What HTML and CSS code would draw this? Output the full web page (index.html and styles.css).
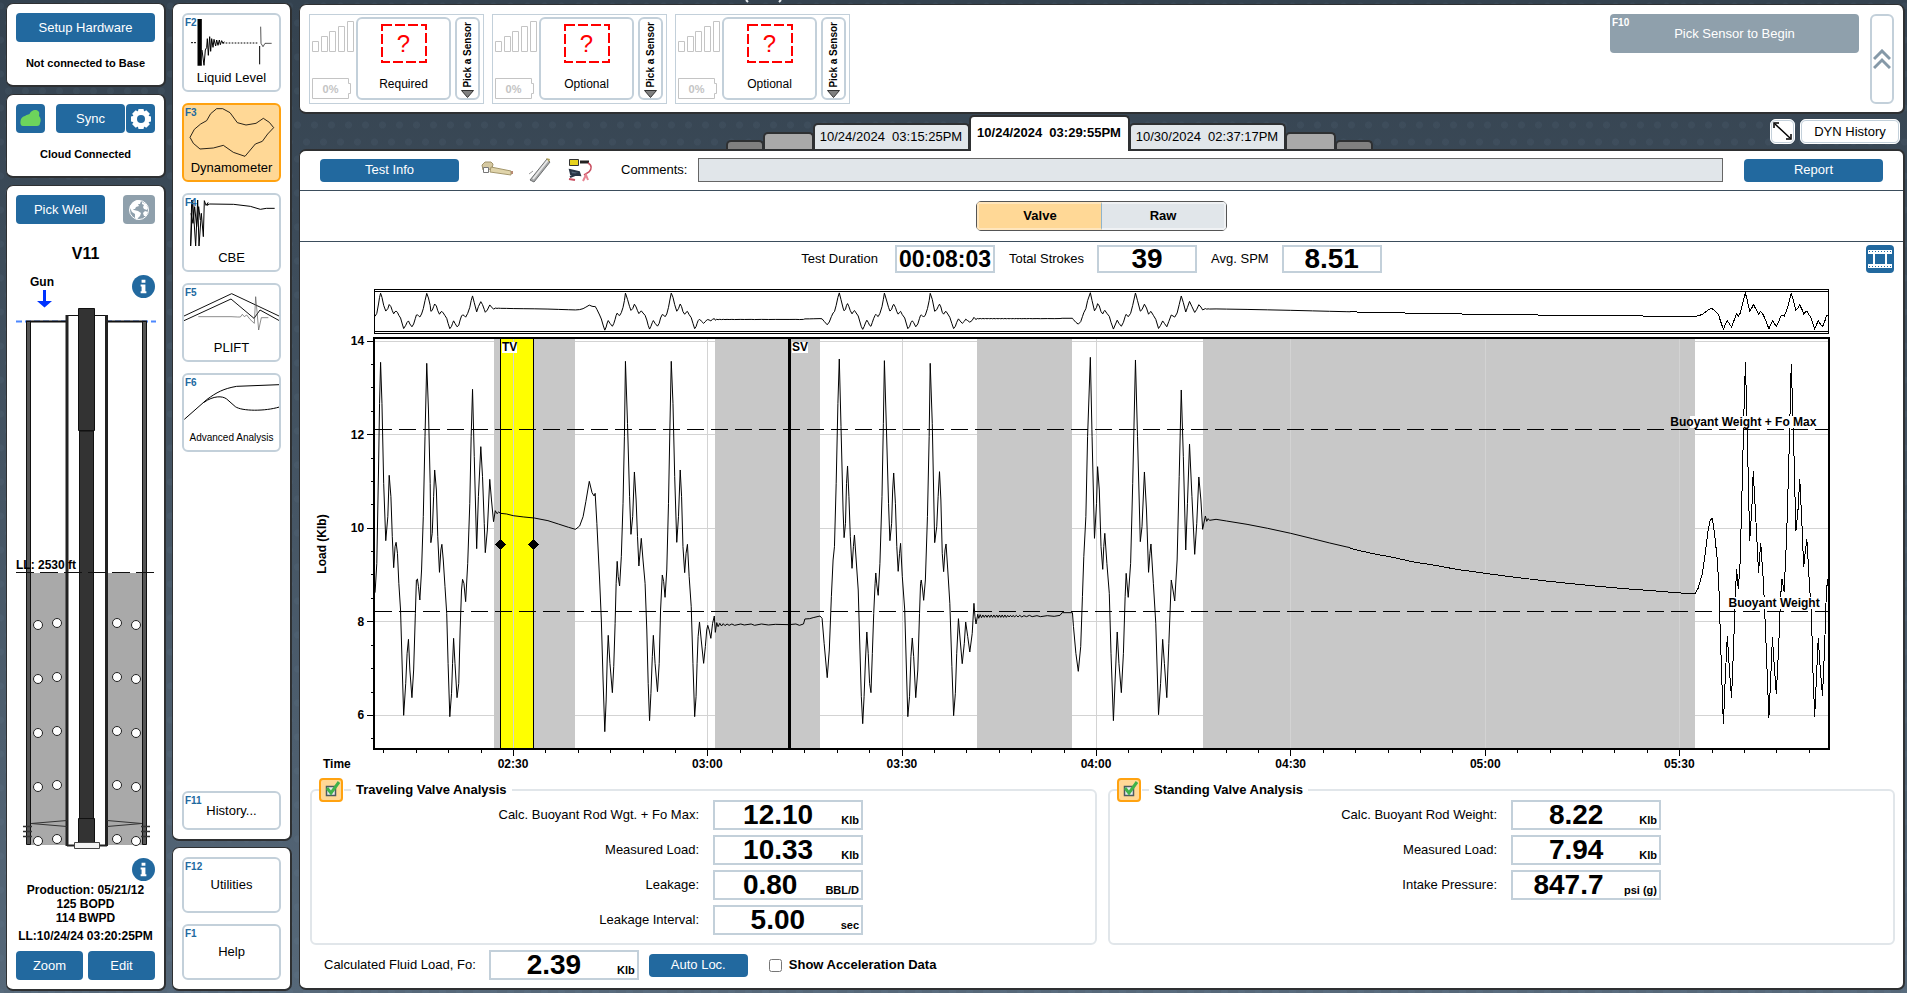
FILE: index.html
```html
<!DOCTYPE html>
<html lang="en">
<head>
<meta charset="utf-8">
<title>Dynamometer</title>
<link rel="stylesheet" href="styles.css">
</head>
<body>
<svg class="sprite" aria-hidden="true">
  <defs>
    <g id="ico-info">
      <circle cx="12" cy="12" r="12" fill="#22699f"/>
      <path d="M10 5h4v3h-4zM9 10h5v7h1v2H9v-2h1v-5H9z" fill="#fff"/>
    </g>
    <g id="ico-signal" fill="none" stroke="#c4c4c4">
      <path d="M.5 21.500h6v10h-6zM9.500 16.500h6v15h-6zM17.500 11.500h6v20h-6zM26.500 6.500h6v25h-6zM35.500 1.500h6v30h-6z"/>
    </g>
    <g id="ico-battery" fill="none" stroke="#c4c4c4">
      <path d="M.5.5h36v5h2v10h-2v5H.5z"/>
    </g>
    <g id="ico-check">
      <path d="M7.500 8.500h9v9h-9z" fill="#e8edf0" stroke="#4c5a60" stroke-width="1.500"/>
      <path d="M8 10l4 5 8-11" fill="none" stroke="#3fb24a" stroke-width="3"/>
    </g>
  </defs>
</svg>
<svg class="title-edge" viewBox="0 0 40 3" aria-hidden="true"><path d="M2 0l2 2M37 0l-2 2" stroke="#e8ecef" stroke-width="2"/></svg>

<aside class="well-column">
  <section class="panel status">
    <button class="btn">Setup Hardware</button>
    <p>Not connected to Base</p>
  </section>

  <section class="panel status">
    <div class="sync-row">
      <button class="btn square" aria-label="Cloud"><svg width="21" height="17" viewBox="0 0 21 17"><path d="M3 16C0 16 0 12 1 9c1-2 3-3 4-3 2-2 5-1 5-3 2-3 6-4 8-2 2 1 1 4 1 5 2 2 2 5 1 7 0 2-1 3-3 3z" fill="#6dd45c"/></svg></button>
      <div class="sync-pair">
        <button class="btn sync">Sync</button>
        <button class="btn square" aria-label="Sync settings"><svg width="20" height="20" viewBox="-10 -10 20 20"><g fill="#fff"><circle r="8"/><path id="cog" d="M-2.500-10h5l1 4h-7zM-2.500 10h5l1-4h-7zM-10-2.500v5l4 1v-7zM10-2.500v5l-4 1v-7z"/><use href="#cog" transform="rotate(45)"/></g><circle r="4" fill="#22699f"/></svg></button>
      </div>
    </div>
    <p>Cloud Connected</p>
  </section>

  <section class="panel well">
    <div class="pick-row">
      <button class="btn pick">Pick Well</button>
      <button class="btn globe" aria-label="Map"><svg width="22" height="22" viewBox="0 0 22 22"><circle cx="11" cy="11" r="9.500" fill="#8fa0ac" stroke="#fff"/><path d="M2 7l3-4 4-2 4 1-1 3-2 0 1 2-3 1-1 2-2 0 1 1 4 1 3 2-1 3-2 2-1 2-2-2 0-4-3-2-2-4zM14 3l4 2 2 4-1 2-3-1-1-2 1-2-2-1zM17 12l3 1-2 4-2 0-1-3z" fill="#fff"/></svg></button>
    </div>
    <h1>V11</h1>
    <div class="bore">
      <svg class="bore-drawing" viewBox="16 267 139 588" preserveAspectRatio="xMidYMin meet">
        <text x="30" y="286">Gun</text>
        <path d="M43 290h3v11h6l-7.500 6.500L37 301h6z" fill="#0033ff"/>
        <path d="M16 321.500h140" stroke="#4d88ff" stroke-width="2" stroke-dasharray="6 3"/>
        <path d="M27 322h39v251H27zM107 322h39v251h-39z" fill="#fff"/>
        <path d="M30 573h37v272H30zM106 573h37v272h-37z" fill="#a9a9a9"/>
        <path d="M67 315.500h40v530H67z" fill="#fff" stroke="#111"/>
        <path d="M26 321.500h41M107 321.500h40" stroke="#111" stroke-width="2"/>
        <path d="M26.500 321.500h4v523h-4zM142.500 321.500h4v523h-4z" fill="#555" stroke="#111"/>
        <path d="M67 315v531M106.500 315v531" stroke="#222" stroke-width="3"/>
        <path d="M67 845.500h40" stroke="#222" stroke-width="2"/>
        <g fill="#333" stroke="#111"><path d="M79.500 431h14v390h-14z"/><path d="M78.500 308.500h16v122h-16zM78.500 818.500h16v25h-16z"/></g>
        <path d="M74.500 842.500h25v6h-25z" fill="#f4f4f4" stroke="#444"/>
        <path d="M31 823.500l36-3M31 823.500l36 3M142 823.500l-35-3M142 823.500l-35 3" stroke="#333" fill="none"/>
        <path d="M23 826.500h9M23 831.500h9M23 836.500h9M141 826.500h9M141 831.500h9M141 836.500h9" stroke="#333" stroke-width="1.500"/>
        <path d="M16 572.500h138" stroke="#111" stroke-dasharray="18 6"/>
        <g id="bubbles" fill="#fff" stroke="#222"><circle cx="38" cy="625" r="4.500"/><circle cx="57" cy="623" r="4.500"/><circle cx="117" cy="623" r="4.500"/><circle cx="136" cy="625" r="4.500"/></g>
        <use href="#bubbles" y="54"/><use href="#bubbles" y="108"/><use href="#bubbles" y="162"/><use href="#bubbles" y="216"/>
        <text x="16" y="569">LL: 2530 ft</text>
      </svg>
      <button class="info info-top" aria-label="Surface details"><svg viewBox="0 0 24 24"><use href="#ico-info"/></svg></button>
    </div>
    <button class="info" aria-label="Production details"><svg viewBox="0 0 24 24"><use href="#ico-info"/></svg></button>
    <div class="production">
      <div>Production: 05/21/12</div>
      <div>125 BOPD</div>
      <div>114 BWPD</div>
      <div class="level">LL:10/24/24 03:20:25PM</div>
    </div>
    <div class="well-actions">
      <button class="btn">Zoom</button>
      <button class="btn">Edit</button>
    </div>
  </section>
</aside>

<nav class="nav-column">
  <section class="panel nav-main">
    <button class="tile"><kbd>F2</kbd>
      <svg viewBox="552 45 285 165"><g fill="none" stroke="#000" stroke-width="3"><path d="M573 128h18" stroke-dasharray="6 3"/><path d="M595 57v140M599 57v140M603 57v140" stroke-width="5"/><path d="M606 150l6 46 4-46 4-8 2-26 3 50 4-56 3 44 3-38 4 26 3-24 5 20 3-18 4 16 4-16 3 14 4-12 4 8 4-5"/><path d="M668 129h108" stroke-dasharray="5 4"/><path d="M779 138v55"/><path d="M782 80l1 50 6 10 6-10h20" stroke-width="2"/></g></svg>
      <span>Liquid Level</span></button>
    <button class="tile active"><kbd>F3</kbd>
      <svg viewBox="552 315 285 165"><path d="M570 412l13-24 19-16 18-10 12-21 18-15h18l22 12 22 30 26 7 30-5 22-15 18 12 13 16-18 19-16 22-21 8-31 37-35-12-30-21-30 8-40 3-20-17z" fill="none" stroke="#000" stroke-width="2.500"/></svg>
      <span>Dynamometer</span></button>
    <button class="tile"><kbd>F4</kbd>
      <svg viewBox="552 585 285 165"><path d="M575 600l-3 138 6-138 9 138 6-138 4 138 7-98 6 70 3-108 5 14 6-8-3 8 8-4 72 1 50 6 30 9 18-3h25M573 640l6 30 5-50 6 60 6-60 5 40" fill="none" stroke="#000" stroke-width="3"/></svg>
      <span>CBE</span></button>
    <button class="tile"><kbd>F5</kbd>
      <svg viewBox="552 855 285 165"><g fill="none" stroke="#111" stroke-width="3"><path d="M552 948l143-67 142 67M552 962l141-65 69 58 18-25 58 32"/><path d="M595 950h98l20 1h8l6-8 6 7 7-5 10 13 13 12 4-80 9 100 8-37h21" stroke="#555" stroke-width="2"/></g></svg>
      <span>PLIFT</span></button>
    <button class="tile"><kbd>F6</kbd>
      <svg viewBox="552 315 285 165"><path d="M553 448l67-59c30-22 50-33 90-40l128-5M612 397c28-20 55-20 68-10l26 23c20 14 90 14 132 1" fill="none" stroke="#000" stroke-width="3"/></svg>
      <span class="small">Advanced Analysis</span></button>
    <button class="tile history"><kbd>F11</kbd><span>History...</span></button>
  </section>
  <section class="panel nav-extra">
    <button class="tile"><kbd>F12</kbd><span>Utilities</span></button>
    <button class="tile"><kbd>F1</kbd><span>Help</span></button>
  </section>
</nav>

<main>
  <section class="panel sensors">
    <div class="sensor">
      <div class="radio"><svg width="42" height="32"><use href="#ico-signal"/></svg><div class="battery"><svg width="39" height="21"><use href="#ico-battery"/></svg><span>0%</span></div></div>
      <button class="sensor-slot"><span class="unknown"><svg width="46" height="39"><path d="M1 1h44v37H1z" fill="none" stroke="#f00" stroke-width="2" stroke-dasharray="10 3"/></svg><b>?</b></span>Required</button>
      <button class="sensor-pick"><span>Pick a Sensor</span><svg width="13" height="8"><path d="M.5.5h12l-6 7z" fill="#808080" stroke="#333"/></svg></button>
    </div>
    <div class="sensor">
      <div class="radio"><svg width="42" height="32"><use href="#ico-signal"/></svg><div class="battery"><svg width="39" height="21"><use href="#ico-battery"/></svg><span>0%</span></div></div>
      <button class="sensor-slot"><span class="unknown"><svg width="46" height="39"><path d="M1 1h44v37H1z" fill="none" stroke="#f00" stroke-width="2" stroke-dasharray="10 3"/></svg><b>?</b></span>Optional</button>
      <button class="sensor-pick"><span>Pick a Sensor</span><svg width="13" height="8"><path d="M.5.5h12l-6 7z" fill="#808080" stroke="#333"/></svg></button>
    </div>
    <div class="sensor">
      <div class="radio"><svg width="42" height="32"><use href="#ico-signal"/></svg><div class="battery"><svg width="39" height="21"><use href="#ico-battery"/></svg><span>0%</span></div></div>
      <button class="sensor-slot"><span class="unknown"><svg width="46" height="39"><path d="M1 1h44v37H1z" fill="none" stroke="#f00" stroke-width="2" stroke-dasharray="10 3"/></svg><b>?</b></span>Optional</button>
      <button class="sensor-pick"><span>Pick a Sensor</span><svg width="13" height="8"><path d="M.5.5h12l-6 7z" fill="#808080" stroke="#333"/></svg></button>
    </div>
    <button class="begin" disabled><kbd>F10</kbd>Pick Sensor to Begin</button>
    <button class="collapse" aria-label="Collapse"><svg width="18" height="20" viewBox="0 0 18 20"><path d="M1 10l8-8 8 8M1 19l8-8 8 8" fill="none" stroke="#8599a8" stroke-width="3"/></svg></button>
  </section>

  <div class="tab-band">
    <div class="tabs">
      <button class="tab stub far" aria-label="Earlier tests"></button>
      <button class="tab stub near" aria-label="Previous test"></button>
      <button class="tab">10/24/2024&nbsp; 03:15:25PM</button>
      <button class="tab current">10/24/2024&nbsp; 03:29:55PM</button>
      <button class="tab">10/30/2024&nbsp; 02:37:17PM</button>
      <button class="tab stub near" aria-label="Next test"></button>
      <button class="tab stub far" aria-label="Later tests"></button>
    </div>
    <button class="outline expand" aria-label="Expand"><svg width="19" height="19" viewBox="0 0 19 19"><path d="M2 2l15 14" stroke="#000" stroke-width="1.500"/><path d="M1 6V1h5M18 12v5h-5" fill="none" stroke="#000" stroke-width="1.500"/></svg></button>
    <button class="outline">DYN History</button>
  </div>

  <section class="panel test">
    <div class="toolbar">
      <button class="btn wide">Test Info</button>
      <div class="tools">
        <svg width="32" height="24" viewBox="0 0 32 24"><path d="M1 7l3-3h6l2 2-1 5-9 1z" fill="#d5c8a0" stroke="#a0926a"/><path d="M2.500 9.500h5v5h-5z" fill="#fff" stroke="#777"/><path d="M10 9l20 4v4l-21-3z" fill="#e0d4aa" stroke="#a3966c"/><path d="M30 13h2v3h-2z" fill="#b88a72"/></svg>
        <svg width="24" height="28" viewBox="0 0 24 28"><path d="M19 3l3 3L6 26l-4-2z" fill="#a7a9aa" stroke="#6d6f70"/><path d="M20 4L5 23" stroke="#e6e6e6" stroke-width="2"/><path d="M18 2l4 1-1 3z" fill="#b0a15a"/><path d="M1 18l4-3" stroke="#999"/></svg>
        <svg width="26" height="26" viewBox="0 0 26 26"><path d="M2.500 2.500h9v6h-9z" fill="#e7d21d" stroke="#333"/><path d="M13 5h9" stroke="#222" stroke-width="3"/><path d="M21 6c4 2 4 6 1 9l-5 3" fill="none" stroke="#c95062" stroke-width="1.500"/><path d="M3 13l9 2 1 3-9-1zM3 20l10-4" fill="#536579" stroke="#273445" stroke-width="2"/><path d="M2 22l6 1" stroke="#c95062" stroke-width="2"/><path d="M16 24l3-6 2 5" fill="none" stroke="#e88593" stroke-width="2"/></svg>
      </div>
      <label for="comments">Comments:</label>
      <input id="comments" type="text">
      <button class="btn wide">Report</button>
    </div>

    <div class="view-row">
      <div class="segmented">
        <button class="on" aria-pressed="true">Valve</button><button aria-pressed="false">Raw</button>
      </div>
    </div>

    <div class="metrics">
      <div class="metric-group">
        <label for="duration">Test Duration</label><output id="duration" class="reading compact">00:08:03</output>
        <label for="strokes">Total Strokes</label><output id="strokes" class="reading">39</output>
        <label for="spm">Avg. SPM</label><output id="spm" class="reading">8.51</output>
      </div>
      <button class="btn film" aria-label="Film strip"><svg width="24" height="18" viewBox="0 0 24 18"><path d="M0 0h24v4H0zM0 14h24v4H0zM5 4h2v10H5zM17 4h2v10h-2z" fill="#fff"/><path d="M1 1.500h22M1 16.500h22" stroke="#22699f" stroke-dasharray="1 2"/></svg></button>
    </div>

    <div class="chart">
      <svg viewBox="300 273 1603 502" preserveAspectRatio="none" shape-rendering="crispEdges" role="img" aria-label="Load over time">
        <defs>
          <g id="trace" fill="none" stroke="#000">
            <g transform="translate(300 270) scale(.34439 .33333)">
              <polyline vector-effect="non-scaling-stroke" points="218,968 223,880 228,600 231,400 234,277 238,400 243,640 249,812 255,740 259,616 264,680 268,800 272,893 276,830 279,817 283,850 287,940 292,1020 297,1200 301,1336 307,1240 311,1150 315,1108 319,1200 325,1283 330,1200 335,1030 338,930 341,927 344,950 348,990 353,900 358,740 363,500 368,280 373,420 378,640 380,818 384,790 388,680 391,600 396,660 400,800 405,907 409,840 412,823 416,870 421,950 426,1030 430,1180 435,1340"/>
              <polyline vector-effect="non-scaling-stroke" points="435,1340 440,1270 443,1180 446,1105 450,1180 456,1283 461,1240 465,1080 469,960 472,928 476,940 481,995 487,880 493,700 497,500 501,358 506,560 513,836 518,680 525,530 530,620 535,760 538,848 544,780 551,628 556,690 562,755 567,722 572,731 577,726 582,730 600,732 619,737 650,741 680,744 720,752 750,762 780,772 800,778 812,768 822,740 830,695 840,634 848,668 854,678 857,670 862,760 870,930 875,1050 880,1230 885,1385"/>
              <polyline vector-effect="non-scaling-stroke" points="885,1385 889,1290 892,1170 895,1096 900,1180 907,1268 911,1190 915,1060 918,940 921,874 924,920 928,948 933,860 938,700 942,500 945,274 951,460 957,680 961,793 966,740 971,606 976,690 980,800 984,888 988,840 991,805 996,870 1002,940 1007,1080 1011,1240 1015,1352 1019,1270 1023,1160 1026,1096 1031,1180 1038,1265 1043,1180 1047,1020 1052,915 1056,935 1060,982 1065,900 1070,700 1074,480 1078,274"/>
              <polyline vector-effect="non-scaling-stroke" points="1078,274 1083,400 1088,620 1094,817 1099,740 1104,600 1108,680 1112,830 1117,908 1121,850 1125,823 1130,920 1136,1010 1141,1180 1146,1340 1150,1280 1153,1180 1156,1100 1160,1056 1165,1110 1172,1180 1177,1130 1181,1080 1184,1066 1188,1080 1193,1105 1198,1060 1203,1038 1206,1087 1210,1058 1214,1070 1219,1060 1224,1068 1229,1061 1234,1067 1240,1062 1246,1066 1254,1062 1262,1066 1280,1062 1290,1065 1310,1062 1320,1066 1340,1062 1360,1065 1380,1063 1420,1064 1440,1062 1450,1066 1462,1062 1466,1047 1480,1046 1490,1043 1510,1038"/>
            </g>
            <g transform="translate(820 270) scale(.34439 .33333)">
              <polyline vector-effect="non-scaling-stroke" points="0,1038 6,1045 12,1120 21,1223 27,1140 33,980 38,870 42,830 47,640 52,400 56,267 61,470 67,720 70,803 74,760 77,640 80,588 84,680 88,800 93,895 97,830 100,795 105,870 111,960 116,1140 120,1280 124,1361 128,1280 132,1170 136,1086 140,1150 144,1240 148,1268 152,1150 156,1030 160,940 162,909 165,945 169,976 174,880 180,680 184,460 187,272 193,480 199,700 203,812 208,760 211,660 214,609 219,700 223,830 227,904 231,850 234,820 239,920 246,1020 251,1200 255,1340"/>
              <polyline vector-effect="non-scaling-stroke" points="255,1340 260,1280 264,1160 268,1104 272,1160 278,1283 284,1200 289,1030 292,940 294,930 298,960 301,991 306,930 312,740 317,500 320,280 326,460 333,818 339,770 343,680 347,605 351,690 355,850 359,905 363,840 366,822 371,900 377,1000 383,1190 388,1337 393,1270 397,1150 402,1046 407,1110 413,1181 419,1120 423,1056 429,1100 435,1146 442,1090 447,1000 450,1040 453,1062 458,1033"/>
              <polyline vector-effect="non-scaling-stroke" points="458,1033 461,1045 465,1034 469,1043 473,1035 477,1042 481,1035 485,1042 489,1035 493,1042 497,1035 501,1042 505,1035 509,1042 513,1035 517,1042 521,1035 525,1042 529,1035 533,1042 537,1035 541,1042 545,1036 549,1041 553,1036 557,1041 561,1036 565,1041 570,1036 575,1041 580,1036 586,1041 592,1037 600,1040 608,1036 616,1040 630,1037 640,1040 660,1037 680,1039 697,1036 703,1028 733,1028 736,1070 743,1150 750,1204"/>
              <polyline vector-effect="non-scaling-stroke" points="750,1204 757,1130 762,980 766,860 772,740 777,500 785,262 790,500 797,805 803,700 806,590 811,660 816,830 821,898 824,830 827,790 833,880 840,970 845,1150 852,1352 857,1230 863,1086 868,1180 875,1268 881,1150 886,980 889,910 895,982 902,880 908,640 916,270 922,500 930,815 935,770 942,606 948,720 954,907 958,850 961,822 968,940 975,1060 983,1334"/>
              <polyline vector-effect="non-scaling-stroke" points="983,1334 989,1240 995,1108 1000,1180 1007,1283 1013,1120 1020,930 1025,960 1030,993 1037,870 1043,620 1049,360 1055,560 1062,840 1067,700 1073,522 1080,680 1088,853 1094,760 1100,621 1106,690 1111,778 1119,738 1123,754 1127,746 1131,751 1150,748 1180,753 1240,763 1300,775 1367,790 1430,806 1480,819 1530,831 1540,833"/>
            </g>
            <g transform="translate(1350 270) scale(.35527 .33333)">
              <polyline vector-effect="non-scaling-stroke" points="0,835 60,850 120,862 180,876 240,886 300,898 381,910 450,920 560,934 660,945 760,955 850,962 930,969 972,970 980,955 992,910 1000,850 1008,780 1014,750 1020,745 1026,790 1033,860 1038,940 1042,1080 1047,1240 1051,1363 1056,1230 1062,1098 1068,1200 1074,1283 1079,1150 1084,1000 1088,896 1093,958 1098,880 1104,640 1109,420 1113,277 1118,480 1125,812 1131,720 1135,604 1142,740 1150,908 1156,818 1164,940 1171,1120 1179,1343 1184,1230 1189,1102 1195,1200 1200,1273 1207,1120 1212,980 1216,928 1222,965 1229,800 1236,540 1242,283 1248,480 1255,784 1261,720 1266,628 1272,760 1277,892 1282,840 1286,808 1292,920 1299,1040 1303,1200 1308,1340 1313,1220 1318,1105 1324,1200 1330,1277 1336,1130 1341,960 1345,928"/>
            </g>
          </g>
        </defs>
        <g fill="none" stroke="#000"><path d="M374.500 289.500h1454v44h-1454zM374.500 291.500h1454M374.500 331.500h1454"/></g>
        <use href="#trace" transform="translate(0 257) scale(1 .1)"/>
        <path d="M375 341.500h1454M375 434.500h1454M375 528.500h1454M375 621.500h1454M375 715.500h1454" stroke="#d3d3d3"/>
        <path d="M494 339h81v410h-81zM715 339h105v410h-105zM977 339h95v410h-95zM1203 339h492v410h-492z" fill="#c8c8c8"/>
        <path d="M501 339h32v410h-32z" fill="#ff0"/>
        <path d="M513.500 339v410M707.500 339v410M902.500 339v410M1096.500 339v410M1290.500 339v410M1485.500 339v410M1679.500 339v410" stroke="#d3d3d3"/>
        <path d="M500.500 339v410M533.500 339v410" stroke="#000"/>
        <path d="M375 429.500h1454M375 611.500h1454" stroke="#000" stroke-dasharray="17 7"/>
        <path d="M789.500 339v410" stroke="#000" stroke-width="3"/>
        <use href="#trace"/>
        <path d="M500.500 539l5.500 5.500-5.500 5.500-5.500-5.500zM533.500 539l5.500 5.500-5.500 5.500-5.500-5.500z"/>
        <path d="M374 338h1455v411H374z" fill="none" stroke="#000" stroke-width="2"/>
        <path d="M367 341.500h7M367 434.500h7M367 528.500h7M367 621.500h7M367 715.500h7M371 364.500h3M371 387.500h3M371 411.500h3M371 458.500h3M371 481.500h3M371 504.500h3M371 551.500h3M371 574.500h3M371 598.500h3M371 645.500h3M371 668.500h3M371 692.500h3M371 738.500h3" stroke="#000"/>
        <path d="M513.500 749v7M707.500 749v7M902.500 749v7M1096.500 749v7M1290.500 749v7M1485.500 749v7M1679.500 749v7M383.500 749v4M416.500 749v4M448.500 749v4M481.500 749v4M545.500 749v4M578.500 749v4M610.500 749v4M643.500 749v4M675.500 749v4M740.500 749v4M772.500 749v4M804.500 749v4M837.500 749v4M869.500 749v4M934.500 749v4M966.500 749v4M999.500 749v4M1031.500 749v4M1064.500 749v4M1128.500 749v4M1161.500 749v4M1193.500 749v4M1226.500 749v4M1258.500 749v4M1323.500 749v4M1355.500 749v4M1388.500 749v4M1420.500 749v4M1452.500 749v4M1517.500 749v4M1550.500 749v4M1582.500 749v4M1614.500 749v4M1647.500 749v4M1712.500 749v4M1744.500 749v4M1776.500 749v4M1809.500 749v4" stroke="#000"/>
      </svg>
      <span class="mark axis-title">Load (Klb)</span>
      <span class="mark y" style="top:13.55%">14</span>
      <span class="mark y" style="top:32.2%">12</span>
      <span class="mark y" style="top:50.8%">10</span>
      <span class="mark y" style="top:69.5%">8</span>
      <span class="mark y" style="top:88.1%">6</span>
      <span class="mark x time">Time</span>
      <span class="mark x" style="left:13.29%">02:30</span>
      <span class="mark x" style="left:25.41%">03:00</span>
      <span class="mark x" style="left:37.55%">03:30</span>
      <span class="mark x" style="left:49.66%">04:00</span>
      <span class="mark x" style="left:61.8%">04:30</span>
      <span class="mark x" style="left:73.94%">05:00</span>
      <span class="mark x" style="left:86.05%">05:30</span>
      <span class="mark flag" style="left:12.6%">TV</span>
      <span class="mark flag" style="left:30.7%">SV</span>
      <span class="mark limit max" style="top:28.4%;right:5.4%">Buoyant Weight + Fo Max</span>
      <span class="mark limit" style="top:64.6%;right:5.2%">Buoyant Weight</span>
    </div>

    <div class="analyses">
      <fieldset>
        <legend>
          <span class="toggle"><input type="checkbox" id="tv" checked><svg viewBox="0 0 24 24"><use href="#ico-check"/></svg></span>
          <label for="tv">Traveling Valve Analysis</label>
        </legend>
        <div class="fields">
          <label for="tv1">Calc. Buoyant Rod Wgt. + Fo Max:</label><output id="tv1" class="reading"><b>12.10</b><small>Klb</small></output>
          <label for="tv2">Measured Load:</label><output id="tv2" class="reading"><b>10.33</b><small>Klb</small></output>
          <label for="tv3">Leakage:</label><output id="tv3" class="reading"><b>0.80</b><small>BBL/D</small></output>
          <label for="tv4">Leakage Interval:</label><output id="tv4" class="reading"><b>5.00</b><small>sec</small></output>
        </div>
      </fieldset>
      <fieldset>
        <legend>
          <span class="toggle"><input type="checkbox" id="sv" checked><svg viewBox="0 0 24 24"><use href="#ico-check"/></svg></span>
          <label for="sv">Standing Valve Analysis</label>
        </legend>
        <div class="fields">
          <label for="sv1">Calc. Buoyant Rod Weight:</label><output id="sv1" class="reading"><b>8.22</b><small>Klb</small></output>
          <label for="sv2">Measured Load:</label><output id="sv2" class="reading"><b>7.94</b><small>Klb</small></output>
          <label for="sv3">Intake Pressure:</label><output id="sv3" class="reading"><b>847.7</b><small>psi (g)</small></output>
        </div>
      </fieldset>
    </div>

    <div class="fluid-row">
      <label for="fo">Calculated Fluid Load, Fo:</label>
      <output id="fo" class="reading"><b>2.39</b><small>Klb</small></output>
      <button class="btn auto">Auto Loc.</button>
      <input type="checkbox" id="accel"><label class="strong" for="accel">Show Acceleration Data</label>
    </div>
  </section>
</main>
</body>
</html>
```
FILE: styles.css
```css
* { box-sizing: border-box; }

body {
  margin: 0;
  padding: 3px 2px 2px 6px;
  height: 100vh;
  min-height: 900px;
  display: flex;
  gap: 6px;
  font: 13px/16px "Liberation Sans", Arial, sans-serif;
  color: #000;
  background:
    radial-gradient(circle, rgba(120, 150, 175, .08) 3px, transparent 4px) 0 6px / 17px 34px,
    radial-gradient(circle, rgba(120, 150, 175, .08) 3px, transparent 4px) 9px 23px / 17px 34px,
    linear-gradient(#34424f, #566879);
}

button, input { font: inherit; color: inherit; margin: 0; }
button { padding: 0; cursor: pointer; }
h1, p { margin: 0; }
svg { display: block; }
.sprite { position: absolute; width: 0; height: 0; }
.title-edge { position: absolute; top: 0; left: 39%; width: 40px; height: 3px; }

.panel {
  background: #fff;
  border: solid #2e3032;
  border-width: 1px 2px 2px 1px;
  border-radius: 7px;
  padding: 9px;
}

.btn {
  border: 0;
  border-radius: 4px;
  background: #22699f;
  color: #fff;
  height: 29px;
}
.square { width: 29px; }
.btn svg, .info svg { margin: auto; }

/* Left column */
.well-column { width: 160px; flex: none; display: flex; flex-direction: column; gap: 7px; }
.status { height: 84px; display: flex; flex-direction: column; gap: 13px; }
.status p { text-align: center; font-size: 11px; font-weight: bold; }
.sync-row, .pick-row { display: flex; justify-content: space-between; }
.sync-pair { display: flex; gap: 1px; }
.sync { width: 69px; }
.well { flex: 1; display: flex; flex-direction: column; min-height: 0; }
.pick { width: 89px; }
.globe { width: 32px; background: #8fa0ac; }
.well h1 { font-size: 16px; line-height: 19px; text-align: center; margin: 20px 0 4px; }
.bore { flex: 1; min-height: 0; position: relative; }
.bore-drawing { width: 100%; height: 100%; overflow: visible; font-weight: bold; font-size: 12px; }
.info { width: 23px; height: 23px; border: 0; background: none; align-self: flex-end; }
.info-top { position: absolute; right: 0; top: 8px; }
.production { text-align: center; font-size: 12px; font-weight: bold; line-height: 14px; white-space: nowrap; margin: 2px -4px 8px; }
.level { margin-top: 4px; }
.well-actions { display: grid; grid-template-columns: 1fr 1fr; gap: 5px; }

/* Function key column */
.nav-column { width: 120px; flex: none; display: flex; flex-direction: column; gap: 6px; }
.nav-main { flex: 1; display: flex; flex-direction: column; gap: 11px; }
.nav-extra { display: grid; gap: 11px; }
.tile {
  position: relative;
  height: 79px;
  border: 2px solid #c3d0da;
  border-radius: 6px;
  background: #fff;
  display: flex;
  flex-direction: column;
  align-items: center;
}
.tile svg { width: 95px; height: 55px; }
.tile .small { font-size: 10px; }
.active { background: #ffd896; border-color: #ffa210; }
kbd { position: absolute; left: 1px; top: 2px; font: bold 10px/12px "Liberation Sans", Arial, sans-serif; color: #22699f; }
.history { height: 39px; margin-top: auto; justify-content: center; }
.nav-extra .tile { height: 56px; justify-content: center; }

/* Main area */
main { flex: 1; min-width: 0; padding: 1px 0; margin-left: 1px; display: flex; flex-direction: column; }
.sensors { display: flex; gap: 8px; padding-bottom: 8px; }
.sensor { width: 175px; height: 90px; border: 1px solid #c3d0da; display: flex; gap: 4px; padding: 2px 3px 3px 2px; }
.radio { display: flex; flex-direction: column; justify-content: space-between; padding: 3px 0 1px; width: 40px; }
.radio svg { flex: none; }
.battery { display: grid; align-items: center; justify-items: start; }
.battery > * { grid-area: 1 / 1; }
.battery span { width: 37px; text-align: center; font-size: 11px; font-weight: bold; line-height: 12px; color: #c4c4c4; }
.sensor-slot, .sensor-pick, .collapse, .outline { background: #fff; border: 2px solid #c3d0da; border-radius: 6px; }
.sensor-slot { flex: 1; font-size: 12px; display: flex; flex-direction: column; align-items: center; gap: 13px; padding-top: 5px; }
.unknown { display: grid; place-items: center; }
.unknown > * { grid-area: 1 / 1; }
.unknown b { color: #f00; font-size: 24px; font-weight: normal; }
.sensor-pick { width: 25px; display: flex; flex-direction: column; align-items: center; gap: 2px; padding-top: 3px; }
.sensor-pick span { writing-mode: vertical-rl; transform: rotate(180deg); font-size: 10px; font-weight: bold; line-height: 13px; white-space: nowrap; }
.begin { position: relative; margin-left: auto; width: 249px; height: 39px; border: 0; border-radius: 4px; background: #8fa0ac; color: #fff; }
.begin kbd { color: #fff; left: 2px; top: 3px; }
.collapse { width: 24px; margin-left: 3px; }
.collapse svg { margin: auto; }

.tab-band { height: 35px; display: flex; align-items: center; padding-right: 5px; gap: 5px; }
.tabs { flex: 1; align-self: stretch; display: flex; justify-content: center; align-items: flex-end; padding-left: 33px; }
.tab { height: 26px; width: 157px; border: 2px solid #2e3032; border-bottom: 0; border-radius: 5px 5px 0 0; background: #e1e6ea; white-space: nowrap; margin-right: -1px; }
.current { position: relative; z-index: 1; height: 36px; width: 161px; background: #fff; font-weight: bold; margin-bottom: -2px; padding-bottom: 2px; }
.stub.near { width: 51px; height: 17px; background: #a9a9a9; }
.stub.far { width: 38px; height: 9px; background: #808080; }
.outline { height: 25px; width: 100px; outline: 1px solid #fff; outline-offset: -1px; }
.expand { width: 25px; }
.expand svg { margin: auto; }

.test { flex: 1; min-height: 0; display: flex; flex-direction: column; padding: 0 0 8px; border-top-width: 2px; }
.toolbar { display: flex; align-items: center; height: 40px; padding: 0 20px 1px 20px; border-bottom: 1px solid #3b4d5c; }
.wide { width: 139px; height: 23px; }
.tools { display: flex; align-items: center; gap: 15px; margin: 0 28px 0 22px; }
#comments { flex: 1; min-width: 0; height: 24px; margin: 0 21px 0 11px; border: 1px solid #666; background: #e1e6ea; }
.view-row { height: 51px; display: flex; justify-content: center; align-items: center; border-bottom: 1px solid #3b4d5c; }
.segmented { display: flex; width: 251px; height: 30px; border: 1px solid #555; border-radius: 5px; overflow: hidden; }
.segmented button { flex: 1; border: 2px solid #f0f2f4; border-left-width: 0; background: #e1e6ea; font-weight: bold; }
.segmented .on { background: #ffd896; border-color: #ffe6bd; border-width: 2px 1px 2px 2px; border-right-color: #8fb4cc; }

.metrics { display: grid; grid-template-columns: 1fr auto 1fr; align-items: center; padding: 3px 9px 0 9px; }
.metric-group { grid-column: 2; display: flex; align-items: center; margin-right: 20px; }
.metric-group .reading { width: 100px; height: 28px; margin: 0 14px 0 13px; font-size: 28px; font-weight: bold; justify-content: center; }
.metric-group .reading:last-child { margin-right: 0; }
.metric-group .compact { margin-left: 17px; font-size: 23px; }
.film { width: 28px; height: 28px; justify-self: end; }
.reading { display: flex; align-items: center; width: 150px; height: 30px; border: 2px solid #c3d0da; background: #fff; }
.reading b { flex: 1; text-align: center; font-size: 28px; }
.reading small { font-size: 11px; font-weight: bold; align-self: flex-end; line-height: 16px; padding-right: 2px; }

.chart { flex: 1; min-height: 0; position: relative; font-size: 12px; font-weight: bold; line-height: 14px; }
.chart > svg { position: absolute; width: 100%; height: 100%; }
.mark { position: absolute; white-space: nowrap; }
.mark.y { left: 4%; transform: translate(-100%, -50%); }
.mark.x { top: 97.8%; transform: translate(-50%, -50%); }
.mark.time { left: 2.3%; }
.flag { top: 13.7%; background: #fff; line-height: 11px; }
.limit { line-height: 12px; background: #fff; }
.limit.max { background: linear-gradient(90deg, transparent 14%, #fff 14%); }
.axis-title { left: 1.4%; top: 54%; writing-mode: vertical-rl; transform: translate(-50%, -50%) rotate(180deg); }

.analyses { display: grid; grid-template-columns: 1fr 1fr; gap: 11px; margin: 5px 8px 5px 10px; }
fieldset { margin: 0; min-width: 0; border: 2px solid #e1e6ea; border-radius: 6px; padding: 0 7px 8px; }
legend { display: flex; align-items: center; height: 20px; padding: 0 5px 0 0; font-weight: bold; }
legend::before { content: ""; order: 1; width: 7px; height: 2px; background: #e1e6ea; margin: 0 5px 0 1px; }
legend label { order: 2; }
.toggle { display: grid; }
.toggle > * { grid-area: 1 / 1; width: 24px; height: 24px; }
.toggle input { appearance: none; border: 2px solid #ffa210; border-radius: 4px; background: #ffd896; }
.toggle svg { pointer-events: none; }
.fields { display: grid; grid-template-columns: minmax(0, 380px) 150px; column-gap: 14px; row-gap: 5px; align-items: center; text-align: right; }
.fluid-row { display: flex; align-items: center; padding-left: 24px; }
.fluid-row .reading { margin: 0 10px 0 13px; }
.auto { width: 99px; height: 23px; }
#accel { width: 13px; height: 13px; margin: 0 7px 0 21px; }
.strong { font-weight: bold; }
```
